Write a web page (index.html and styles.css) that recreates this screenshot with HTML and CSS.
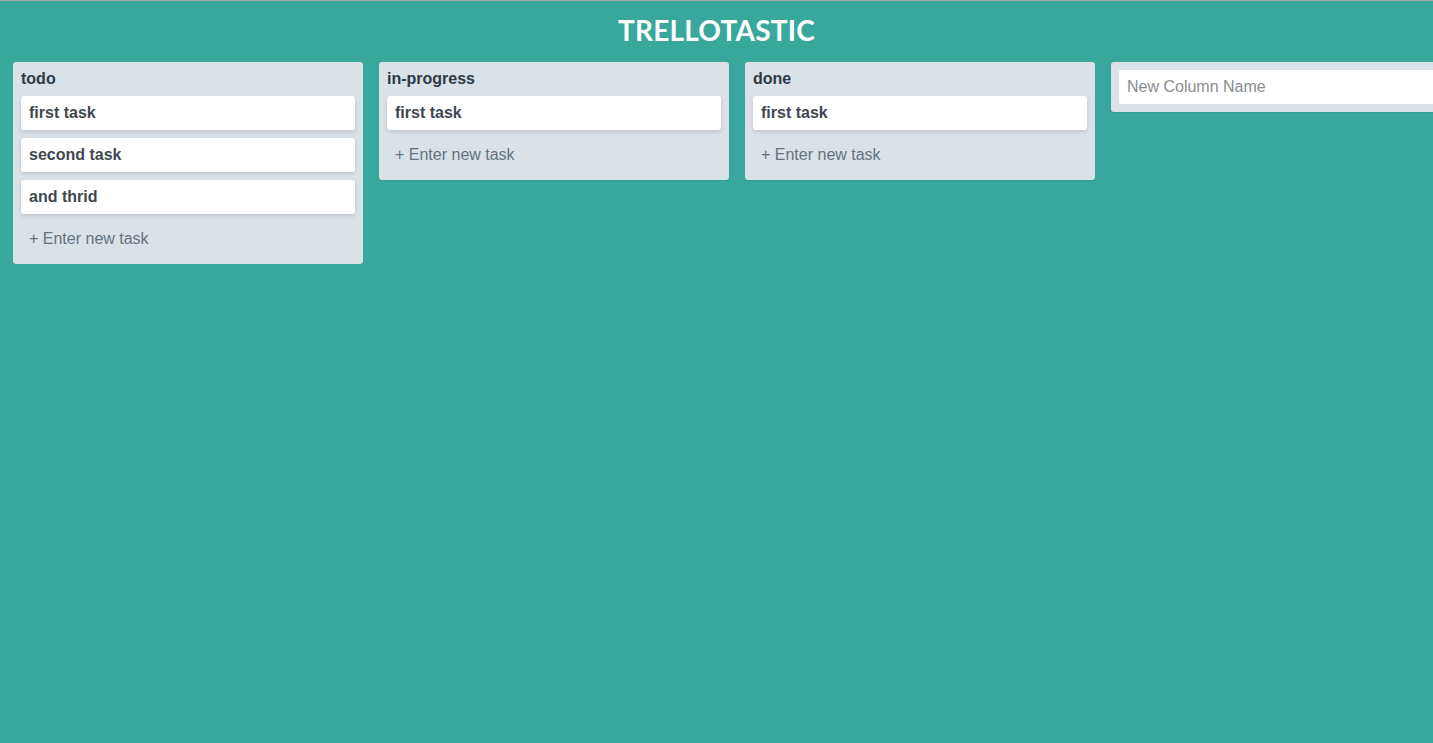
FILE: index.html
```html
<!DOCTYPE html>
<html>
<head>
<meta charset="utf-8">
<title>Trellotastic</title>
<link rel="stylesheet" href="styles.css">
</head>
<body>
<div class="app">
  <header class="header"><h1 class="title">TRELLOTASTIC</h1></header>
  <main class="board">
    <section class="column">
      <h2 class="column-title">todo</h2>
      <div class="card">first task</div>
      <div class="card">second task</div>
      <div class="card">and thrid</div>
      <div class="new-task">+ Enter new task</div>
    </section>
    <section class="column">
      <h2 class="column-title">in-progress</h2>
      <div class="card">first task</div>
      <div class="new-task">+ Enter new task</div>
    </section>
    <section class="column">
      <h2 class="column-title">done</h2>
      <div class="card">first task</div>
      <div class="new-task">+ Enter new task</div>
    </section>
    <section class="column column-new">
      <input class="new-column" type="text" placeholder="New Column Name">
    </section>
  </main>
</div>
</body>
</html>
```

FILE: styles.css
```css
html, body {
  margin: 0;
  padding: 0;
  height: 100%;
  background: #38a89d;
  overflow: hidden;
}
.app {
  border-top: 1px solid #a3b0ae;
  min-height: 100%;
  box-sizing: border-box;
  font-family: "Liberation Sans", Arial, sans-serif;
  color: #3d4852;
}
.header {
  padding: 14px 0 17px;
  text-align: center;
}
.title {
  margin: 0;
  font-family: Lato, "Liberation Sans", sans-serif;
  font-size: 28px;
  line-height: 30px;
  font-weight: 700;
  color: #ffffff;
  letter-spacing: 0.2px;
}
.board {
  display: flex;
  align-items: flex-start;
  gap: 16px;
  padding-left: 13px;
  overflow: hidden;
}
.column {
  flex: 0 0 350px;
  box-sizing: border-box;
  background: #dae1e7;
  border-radius: 3px;
  padding: 8px;
  display: flex;
  flex-direction: column;
  gap: 8px;
  box-shadow: 0 1px 2px rgba(0,0,0,0.08);
}
.column-title {
  margin: 0;
  font-size: 16px;
  line-height: 18px;
  font-weight: 700;
  color: #2f3a45;
}
.card {
  background: #ffffff;
  border-radius: 3px;
  padding: 0 8px;
  height: 34px;
  line-height: 34px;
  font-size: 16px;
  font-weight: 700;
  color: #3f4850;
  box-shadow: 0 2px 4px rgba(0,0,0,0.12);
}
.new-task {
  padding: 0 8px;
  height: 34px;
  line-height: 34px;
  font-size: 16px;
  color: #66727d;
}
.new-column {
  display: block;
  width: 100%;
  box-sizing: border-box;
  height: 34px;
  border: 0;
  border-radius: 2px;
  padding: 0 8px;
  font-family: "Liberation Sans", Arial, sans-serif;
  font-size: 16px;
  background: #ffffff;
  outline: none;
}
.new-column::placeholder {
  color: #8a8d91;
}
```
